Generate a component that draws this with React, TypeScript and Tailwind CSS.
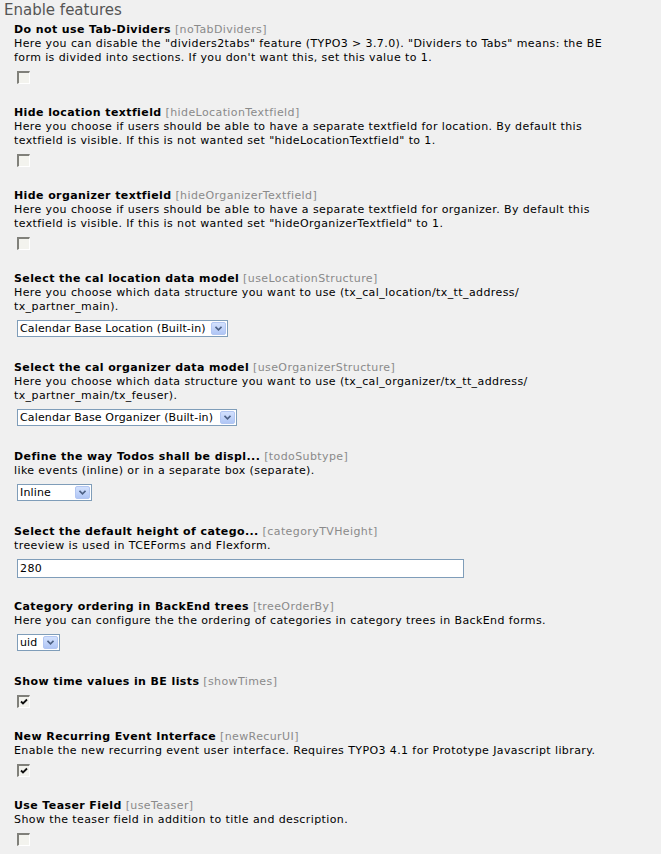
import React from "react";

type Control =
  | { kind: "check"; checked?: boolean }
  | { kind: "select"; value: string; width: number }
  | { kind: "input"; value: string; width: number };

type Item = { title: string; field: string; lines: string[]; control: Control };

const items: Item[] = [
  {
    title: "Do not use Tab-Dividers",
    field: "noTabDividers",
    lines: [
      'Here you can disable the "dividers2tabs" feature (TYPO3 > 3.7.0). "Dividers to Tabs" means: the BE',
      "form is divided into sections. If you don't want this, set this value to 1.",
    ],
    control: { kind: "check" },
  },
  {
    title: "Hide location textfield",
    field: "hideLocationTextfield",
    lines: [
      "Here you choose if users should be able to have a separate textfield for location. By default this",
      'textfield is visible. If this is not wanted set "hideLocationTextfield" to 1.',
    ],
    control: { kind: "check" },
  },
  {
    title: "Hide organizer textfield",
    field: "hideOrganizerTextfield",
    lines: [
      "Here you choose if users should be able to have a separate textfield for organizer. By default this",
      'textfield is visible. If this is not wanted set "hideOrganizerTextfield" to 1.',
    ],
    control: { kind: "check" },
  },
  {
    title: "Select the cal location data model",
    field: "useLocationStructure",
    lines: [
      "Here you choose which data structure you want to use (tx_cal_location/tx_tt_address/",
      "tx_partner_main).",
    ],
    control: { kind: "select", value: "Calendar Base Location (Built-in)", width: 211 },
  },
  {
    title: "Select the cal organizer data model",
    field: "useOrganizerStructure",
    lines: [
      "Here you choose which data structure you want to use (tx_cal_organizer/tx_tt_address/",
      "tx_partner_main/tx_feuser).",
    ],
    control: { kind: "select", value: "Calendar Base Organizer (Built-in)", width: 220 },
  },
  {
    title: "Define the way Todos shall be displ...",
    field: "todoSubtype",
    lines: ["like events (inline) or in a separate box (separate)."],
    control: { kind: "select", value: "Inline", width: 75 },
  },
  {
    title: "Select the default height of catego...",
    field: "categoryTVHeight",
    lines: ["treeview is used in TCEForms and Flexform."],
    control: { kind: "input", value: "280", width: 447 },
  },
  {
    title: "Category ordering in BackEnd trees",
    field: "treeOrderBy",
    lines: ["Here you can configure the the ordering of categories in category trees in BackEnd forms."],
    control: { kind: "select", value: "uid", width: 43 },
  },
  {
    title: "Show time values in BE lists",
    field: "showTimes",
    lines: [],
    control: { kind: "check", checked: true },
  },
  {
    title: "New Recurring Event Interface",
    field: "newRecurUI",
    lines: ["Enable the new recurring event user interface. Requires TYPO3 4.1 for Prototype Javascript library."],
    control: { kind: "check", checked: true },
  },
  {
    title: "Use Teaser Field",
    field: "useTeaser",
    lines: ["Show the teaser field in addition to title and description."],
    control: { kind: "check" },
  },
];

function Checkbox({ checked }: { checked?: boolean }) {
  return (
    <div className="w-[13px] h-[13px] border-t-2 border-l-2 border-t-[#80807a] border-l-[#80807a] border-b border-r border-b-white border-r-white bg-[#f3f3ee] flex items-center justify-center">
      {checked && (
        <svg width="8" height="8" viewBox="0 0 8 8">
          <path d="M1 3.5 L3 5.5 L7 1.5" stroke="#111" strokeWidth="1.8" fill="none" />
        </svg>
      )}
    </div>
  );
}

function Select({ value, width }: { value: string; width: number }) {
  return (
    <div
      className="h-[17px] border border-[#7f9db9] bg-white flex items-stretch"
      style={{ width }}
    >
      <span className="flex-1 pl-[2px] leading-[15px] whitespace-nowrap overflow-hidden tracking-[0.15px]">
        {value}
      </span>
      <span className="w-[15px] m-[1px] ml-0 rounded-[2px] border border-[#b2c6f2] bg-gradient-to-b from-[#d3e1fd] to-[#b0c6f5] flex items-center justify-center">
        <svg width="7" height="5" viewBox="0 0 7 5">
          <path d="M0.5 0.8 L3.5 3.8 L6.5 0.8" stroke="#4d6185" strokeWidth="1.6" fill="none" />
        </svg>
      </span>
    </div>
  );
}

function Field({ item }: { item: Item }) {
  const c = item.control;
  return (
    <div className="mb-[22px]">
      <div className="leading-[14px] whitespace-nowrap">
        <span className="font-bold text-black">{item.title}</span>{" "}
        <span className="text-[#8a8a8a]">[{item.field}]</span>
      </div>
      {item.lines.map((l, i) => (
        <div key={i} className="leading-[14px] whitespace-nowrap text-black">
          {l}
        </div>
      ))}
      <div className="pt-[6px] pl-[3px]">
        {c.kind === "check" && <Checkbox checked={c.checked} />}
        {c.kind === "select" && (
          <div className="h-[19px]">
            <Select value={c.value} width={c.width} />
          </div>
        )}
        {c.kind === "input" && (
          <div
            className="h-[19px] border border-[#7f9db9] bg-white pl-[2px] leading-[17px]"
            style={{ width: c.width }}
          >
            {c.value}
          </div>
        )}
      </div>
    </div>
  );
}

export default function App() {
  return (
    <div className="w-[661px] h-[854px] overflow-hidden bg-[#f0f0f0] font-['DejaVu_Sans',sans-serif] text-[11px] tracking-[0.4px]">
      <div className="pl-[4px] h-[22px] leading-[20px] text-[15px] tracking-normal text-[#555]">Enable features</div>
      <div className="pl-[14px] pt-[1px]">
        {items.map((it) => (
          <Field key={it.field} item={it} />
        ))}
      </div>
    </div>
  );
}
